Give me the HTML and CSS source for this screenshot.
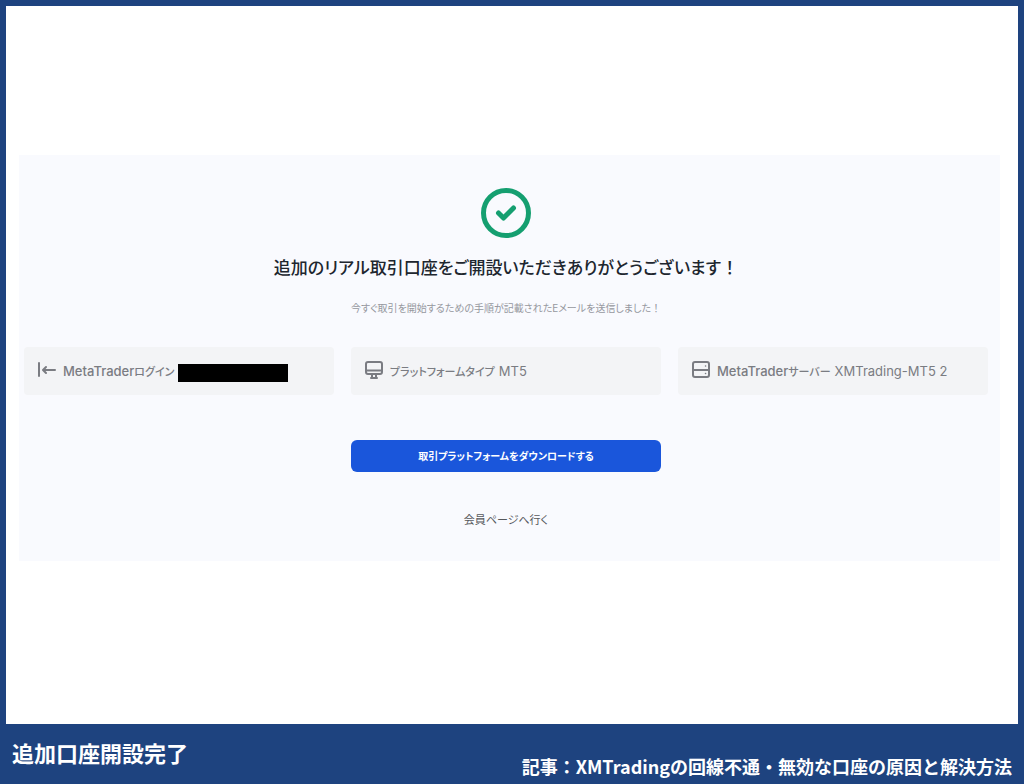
FILE: index.html
```html
<!DOCTYPE html>
<html lang="ja">
<head>
    <meta charset="UTF-8">
    <meta name="viewport" content="width=device-width, initial-scale=1.0">
    <title>追加口座開設完了</title>
    <link rel="stylesheet" href="styles.css">
</head>
<body>
    <main>
        <section class="panel">
            <svg class="check" viewBox="0 0 50 50" aria-hidden="true">
                <circle cx="25" cy="25" r="22.5" />
                <path d="M17.5 25l5 5 10-10" />
            </svg>
            <h1>追加のリアル取引口座をご開設いただきありがとうございます<span class="full">！</span></h1>
            <p class="lead">今すぐ取引を開始するための手順が記載されたEメールを送信しました<span class="full">！</span></p>

            <div class="cards">
                <div class="card">
                    <svg class="icon" viewBox="0 0 20 20" aria-hidden="true">
                        <path d="M2 3v13M18 10H7" />
                        <path d="M9 7l-3 3 3 3" />
                    </svg>
                    <span class="label">MetaTrader<span class="kana">ログイン</span></span>
                    <span class="masked"></span>
                </div>
                <div class="card">
                    <svg class="icon" viewBox="0 0 20 20" aria-hidden="true">
                        <rect x="2" y="2" width="16" height="12" rx="2" />
                        <path d="M2 10.5h16M8 14v3M12 14v3M7 18h6" />
                    </svg>
                    <span class="label"><span class="kana">プラットフォームタイプ</span></span>
                    <span>MT5</span>
                </div>
                <div class="card">
                    <svg class="icon" viewBox="0 0 20 20" aria-hidden="true">
                        <rect x="2" y="2" width="16" height="15" rx="2" />
                        <path d="M2 10h16" />
                        <path class="dots" d="M14.5 6h.1M14.5 13.5h.1" />
                    </svg>
                    <span class="label">MetaTrader<span class="kana">サーバー</span></span>
                    <span>XMTrading-MT5 2</span>
                </div>
            </div>

            <div class="actions">
                <button type="button">取引プラットフォームをダウンロードする</button>
                <a href="#">会員ページへ行く</a>
            </div>
        </section>
    </main>

    <footer>
        <h2>追加口座開設完了</h2>
        <p>記事：XMTradingの回線不通・無効な口座の原因と解決方法</p>
    </footer>
</body>
</html>
```

FILE: styles.css
```css
* {
    box-sizing: border-box;
}

body {
    background-color: #1e437f;
    color: #7a7c82;
    font-family: Inter, 'Noto Sans CJK JP', sans-serif;
    font-feature-settings: "palt";
    margin: 0;
    padding: 6px 6px 0;
    min-height: 100vh;
    display: flex;
    flex-direction: column;
}

h1, h2, p {
    margin: 0;
}

main {
    background-color: #fff;
    padding: 149px 18px 24px 13px;
    flex-grow: 1;
}

.panel {
    background-color: #f9fafe;
    padding: 33px 12px 31px 5px;
    display: flex;
    flex-direction: column;
    align-items: center;
}

.check {
    width: 50px;
    height: 50px;
    fill: none;
    stroke: #159f70;
    stroke-width: 5;
    stroke-linecap: round;
    stroke-linejoin: round;
}

h1 {
    color: #20262e;
    font-size: 17px;
    line-height: 28px;
    font-weight: 500;
    margin-top: 16px;
}

.lead {
    color: #96989e;
    font-size: 10px;
    line-height: 20px;
    margin-top: 16px;
}

/* full-width punctuation */
.full {
    font-feature-settings: normal;
}

.cards, .actions {
    display: grid;
    grid-template-columns: repeat(3, 1fr);
    column-gap: 17px;
    width: 100%;
}

.cards {
    margin-top: 29px;
}

.card {
    background-color: #f3f4f6;
    border-radius: 4px;
    height: 48px;
    padding: 0 13px;
    display: flex;
    align-items: center;
    gap: 4px;
    font-size: 13px;
    line-height: 20px;
}

.icon {
    width: 20px;
    height: 20px;
    margin: 0 2px 2px 0;
    fill: none;
    stroke: #7a7c82;
    stroke-width: 2;
    stroke-linecap: round;
    stroke-linejoin: round;
}

.icon .dots {
    stroke-width: 1.5;
}

.label {
    font-weight: 500;
}

.kana {
    font-size: 11px;
}

.masked {
    background-color: #000;
    width: 110px;
    height: 18px;
    margin-top: 4px;
}

.actions {
    margin-top: 45px;
    row-gap: 38px;
}

.actions button, .actions a {
    grid-column: 2;
}

.actions button {
    background-color: #1a56db;
    color: #fff;
    border: none;
    border-radius: 6px;
    height: 32px;
    padding: 0 0 2px;
    font-family: inherit;
    font-feature-settings: inherit;
    font-size: 10px;
    font-weight: 700;
    cursor: pointer;
}

.actions button:hover {
    background-color: #1e429f;
}

.actions a {
    color: #56585c;
    font-size: 11px;
    line-height: 20px;
    text-align: center;
    text-decoration: none;
}

footer {
    color: #fff;
    font-family: 'Noto Sans CJK JP', sans-serif;
    font-feature-settings: normal;
    height: 60px;
    padding: 0 6px 2px;
    display: flex;
    justify-content: space-between;
}

footer h2 {
    font-size: 22px;
    line-height: 56px;
    font-weight: 700;
}

footer p {
    font-size: 18px;
    line-height: 32px;
    font-weight: 700;
    align-self: flex-end;
}
```
